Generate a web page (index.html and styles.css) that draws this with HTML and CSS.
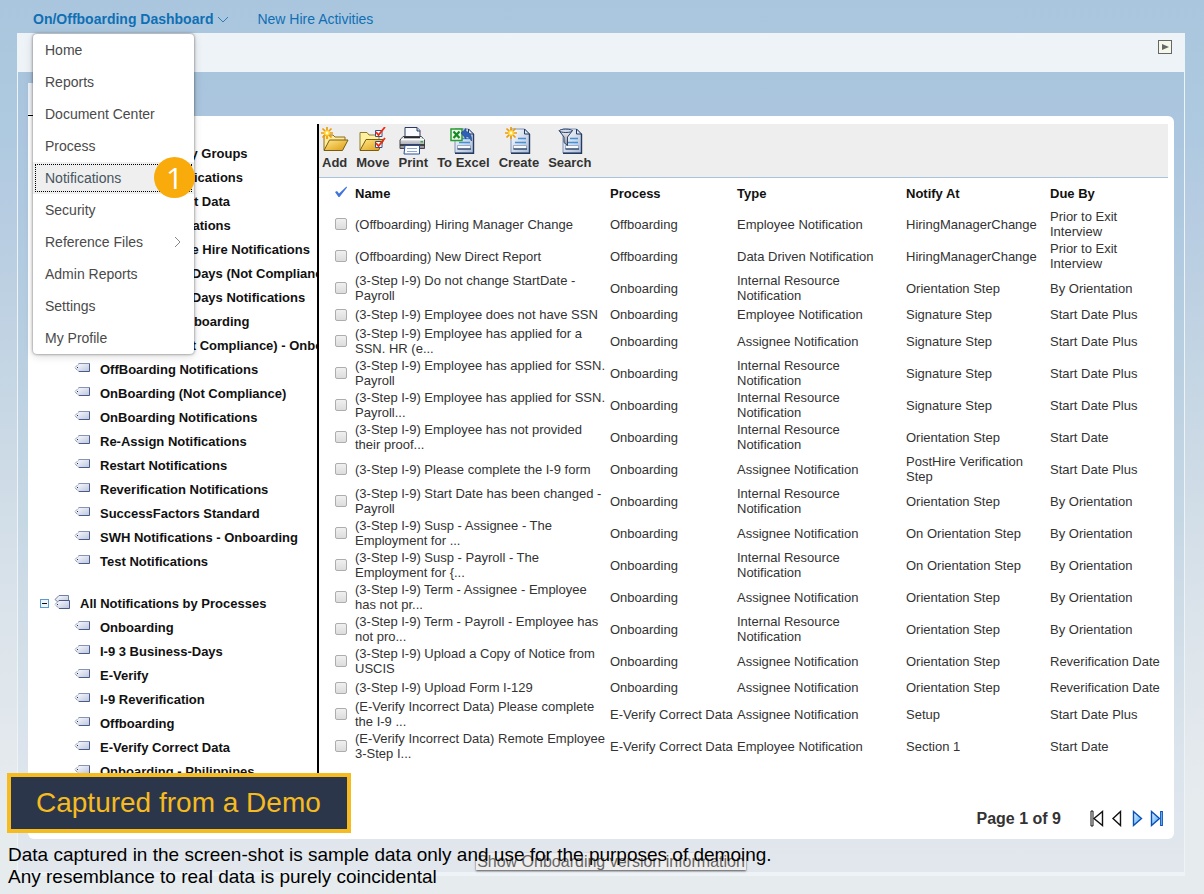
FILE: index.html
```html
<!DOCTYPE html>
<html lang="en">
<head>
<meta charset="utf-8">
<title>On/Offboarding Dashboard</title>
<link rel="stylesheet" href="styles.css">
</head>
<body>
<svg class="sprite" aria-hidden="true">
  <defs>
    <linearGradient id="gTag" x1="0" y1="0" x2="1" y2="1"><stop offset="0" stop-color="#fff"/><stop offset="1" stop-color="#b9c3de"/></linearGradient>
    <linearGradient id="gGold" x1="0" y1="0" x2="1" y2="1"><stop offset="0" stop-color="#ffe98a"/><stop offset="1" stop-color="#dc9a10"/></linearGradient>
    <linearGradient id="gDoc" x1="0" y1="0" x2="1" y2="1"><stop offset="0" stop-color="#fff"/><stop offset="1" stop-color="#a9bbd6"/></linearGradient>
    <linearGradient id="gBlue" x1="0" y1="0" x2="1" y2="1"><stop offset="0" stop-color="#e4f5ff"/><stop offset="1" stop-color="#3fa0f5"/></linearGradient>
    <linearGradient id="gMetal" x1="0" y1="0" x2="0" y2="1"><stop offset="0" stop-color="#f4f4f6"/><stop offset="1" stop-color="#8d8f98"/></linearGradient>
  </defs>
  <symbol id="tag" viewBox="0 0 17 10">
    <path d="M5 .5H15.500V9H5L1 5z" fill="url(#gTag)"/>
    <path d="M5 .5H15.500" stroke="#8794b8" fill="none"/><path d="M15.500 .5V8.500H5" stroke="#4a5b8a" fill="none"/>
    <path d="M5 .5L.8 4.700L5 8.700" stroke="#5d6b90" stroke-dasharray="1 1" fill="none"/><rect x="3" y="4" width="1" height="1" fill="#333"/>
  </symbol>
  <symbol id="tags" viewBox="0 0 17 15">
    <path d="M5 .5H14.500V8H5L1 4.500z" fill="url(#gTag)" stroke="#6f7ea6"/>
    <path d="M5 5.500H15.500V13.500H5L1 9.500z" fill="url(#gTag)"/><path d="M5 5.500H15.500V13.500H5" stroke="#4a5b8a" fill="none"/>
    <path d="M5 5.500L1 9.500L5 13.500" stroke="#5d6b90" stroke-dasharray="1 1" fill="none"/><rect x="3" y="9" width="1" height="1" fill="#333"/>
  </symbol>
  <symbol id="spark" viewBox="0 0 12 12">
    <path d="M6 0V12M0 6H12M1.500 1.500L10.500 10.500M10.500 1.500L1.500 10.500" stroke="#f09a08" stroke-width="1.700"/>
    <circle cx="6" cy="6" r="2.800" fill="#ffd93a"/><circle cx="6" cy="6" r="1.400" fill="#fffbd0"/>
  </symbol>
  <symbol id="doc" viewBox="0 0 21 26">
    <path d="M1 1H14.500L19.500 6V25H1z" fill="url(#gDoc)" stroke="#7f93b5"/>
    <path d="M19.500 6V25.300H1" fill="none" stroke="#243a60" stroke-width="1.400"/>
    <path d="M14.500 1V6H19.500z" fill="#dfe8f5" stroke="#243a60"/>
    <path d="M8 10.500H16M5 14.500H16" stroke="#4690d8" stroke-width="1.300"/>
    <path d="M3.500 17.500H16.500V21H3.500z" fill="#f6f9fd" stroke="#8a9cba" stroke-width=".8"/><path d="M3.500 21H17" stroke="#243a60" stroke-width="1.200"/>
  </symbol>
  <symbol id="add" viewBox="0 0 28 28">
    <path d="M3 23V8H12L14 10H24V13" fill="#ffeb9a" stroke="#8c6f20"/>
    <path d="M3 23.500L8.500 13H27L21.500 23.500z" fill="url(#gGold)" stroke="#7a5c10"/>
    <use href="#spark" x="0" y="0" width="12" height="12"/>
  </symbol>
  <symbol id="move" viewBox="0 0 28 28">
    <path d="M1 23V5.500H8L10 8H20V13" fill="#fff0a0" stroke="#8c7a35"/>
    <path d="M1 23.500L7 12.500H25L19.500 23.500z" fill="url(#gGold)" stroke="#7a5c10"/>
    <path d="M16.500 3.500H23V9.500H16.500zM16.500 14.500H23V20.500H16.500z" fill="#fff" stroke="#35508c"/>
    <path d="M17 5L19.500 8L26 0M17 16L19.500 19L26 11" fill="none" stroke="#f02a10" stroke-width="1.800"/>
  </symbol>
  <symbol id="print" viewBox="0 0 28 28">
    <path d="M6 11V.5H18L21 3.500V11" fill="#f8faff" stroke="#2c3a60"/>
    <path d="M18 .5V4H21" fill="#c7d3ea" stroke="#2c3a60"/>
    <path d="M4 9.500H22.500L25.500 13V21.500H1V13z" fill="url(#gMetal)" stroke="#44464f"/>
    <path d="M2 12.500H25" stroke="#fff" stroke-width="1.500"/><path d="M5 10.500H21" stroke="#27282e" stroke-width="1.500"/>
    <path d="M1 18H26" stroke="#34353c" stroke-width="1.800"/><rect x="21.500" y="14" width="2.500" height="1.500" fill="#28b43a"/>
    <path d="M6 18.500H20.500V27H5z" fill="#fff" stroke="#27509a"/><path d="M8 21.500H18M8 24.500H18" stroke="#8fa7d0"/>
  </symbol>
  <symbol id="excel" viewBox="0 0 28 28">
    <use href="#doc" x="5" y="1" width="21" height="26"/>
    <path d="M2 2H13V13.500H2z" fill="#edf8e8" stroke="#2a9b35" stroke-width="1.500"/>
    <path d="M4.500 4.500L10.500 11M10.500 4.500L4.500 11" stroke="#168a25" stroke-width="2.300"/>
    <path d="M12 6L17 1.500V4.500C21 5 23 9 22.500 14C20.500 10.500 19 9.500 17 9.500V12z" fill="#2f60b8" stroke="#1b3f88" stroke-width=".6"/>
  </symbol>
  <symbol id="create" viewBox="0 0 28 28">
    <use href="#doc" x="5" y="1" width="21" height="26"/><use href="#spark" x="0" y="0" width="12" height="12"/>
  </symbol>
  <symbol id="search" viewBox="0 0 28 28">
    <use href="#doc" x="6" y="1" width="21" height="26"/>
    <path d="M3 3.500H16.500L11.500 10V18.500L8 15.500V10z" fill="url(#gMetal)" stroke="#2c4269"/>
    <ellipse cx="9.800" cy="3.800" rx="6.500" ry="1.700" fill="#cfdaea" stroke="#2c4269"/>
  </symbol>
</svg>

<div class="page">
  <nav class="topnav">
    <button class="nav-main" type="button">On/Offboarding Dashboard
      <svg width="12" height="7" viewBox="0 0 12 7"><path d="M1 1L6 6L11 1" fill="none" stroke="#2f7db8"/></svg>
    </button>
    <a class="nav-link" href="#">New Hire Activities</a>
    <div class="menu">
      <button type="button">Home</button>
      <button type="button">Reports</button>
      <button type="button">Document Center</button>
      <button type="button">Process</button>
      <button type="button" class="focused">Notifications</button>
      <button type="button">Security</button>
      <button type="button">Reference Files
        <svg width="7" height="12" viewBox="0 0 7 12"><path d="M1 1L6 6L1 11" fill="none" stroke="#888"/></svg>
      </button>
      <button type="button">Admin Reports</button>
      <button type="button">Settings</button>
      <button type="button">My Profile</button>
      <span class="badge">1</span>
    </div>
  </nav>

  <div class="frame">
    <header class="band">
      <button class="play" type="button" aria-label="Open panel"><svg width="7" height="6" viewBox="0 0 7 6"><path d="M0 0L7 3L0 6z" fill="#666"/></svg></button>
    </header>
    <div class="body">
      <div class="tab"></div>
      <main class="content">
        <aside class="tree">
          <ul>
            <li class="group"><span class="toggle"></span><svg class="tags"><use href="#tags"/></svg>All Notifications by Groups</li>
            <li><svg><use href="#tag"/></svg>Customer Notifications</li>
            <li><svg><use href="#tag"/></svg>E-Verify Correct Data</li>
            <li><svg><use href="#tag"/></svg>E-Verify Notifications</li>
            <li><svg><use href="#tag"/></svg>Temp Employee Hire Notifications</li>
            <li><svg><use href="#tag"/></svg>I-9 3 Business-Days (Not Compliance)</li>
            <li><svg><use href="#tag"/></svg>I-9 3 Business-Days Notifications</li>
            <li><svg><use href="#tag"/></svg>Department Onboarding</li>
            <li><svg><use href="#tag"/></svg>All Groups (Not Compliance) - Onboarding</li>
            <li><svg><use href="#tag"/></svg>OffBoarding Notifications</li>
            <li><svg><use href="#tag"/></svg>OnBoarding (Not Compliance)</li>
            <li><svg><use href="#tag"/></svg>OnBoarding Notifications</li>
            <li><svg><use href="#tag"/></svg>Re-Assign Notifications</li>
            <li><svg><use href="#tag"/></svg>Restart Notifications</li>
            <li><svg><use href="#tag"/></svg>Reverification Notifications</li>
            <li><svg><use href="#tag"/></svg>SuccessFactors Standard</li>
            <li><svg><use href="#tag"/></svg>SWH Notifications - Onboarding</li>
            <li><svg><use href="#tag"/></svg>Test Notifications</li>
          </ul>
          <ul>
            <li class="group"><span class="toggle"></span><svg class="tags"><use href="#tags"/></svg>All Notifications by Processes</li>
            <li><svg><use href="#tag"/></svg>Onboarding</li>
            <li><svg><use href="#tag"/></svg>I-9 3 Business-Days</li>
            <li><svg><use href="#tag"/></svg>E-Verify</li>
            <li><svg><use href="#tag"/></svg>I-9 Reverification</li>
            <li><svg><use href="#tag"/></svg>Offboarding</li>
            <li><svg><use href="#tag"/></svg>E-Verify Correct Data</li>
            <li><svg><use href="#tag"/></svg>Onboarding - Philippines</li>
          </ul>
        </aside>
        <section class="list">
          <div class="toolbar">
            <button type="button"><svg><use href="#add"/></svg>Add</button>
            <button type="button"><svg><use href="#move"/></svg>Move</button>
            <button type="button"><svg><use href="#print"/></svg>Print</button>
            <button type="button"><svg><use href="#excel"/></svg>To Excel</button>
            <button type="button"><svg><use href="#create"/></svg>Create</button>
            <button type="button"><svg><use href="#search"/></svg>Search</button>
          </div>
          <table>
            <colgroup><col class="c-check"><col class="c-name"><col class="c-process"><col class="c-type"><col class="c-notify"><col class="c-due"></colgroup>
            <thead>
              <tr><th><svg class="tick" width="14" height="12" viewBox="0 0 14 12"><path d="M1 6L3 5L5 7.500L12.500 .5L13 1.500L5.500 11H4.500z" fill="#3f74dc"/></svg></th><th>Name</th><th>Process</th><th>Type</th><th>Notify At</th><th>Due By</th></tr>
            </thead>
            <tbody>
              <tr><td><input type="checkbox" aria-label="Select row 1"></td><td>(Offboarding) Hiring Manager Change</td><td>Offboarding</td><td>Employee Notification</td><td>HiringManagerChange</td><td>Prior to Exit Interview</td></tr>
              <tr><td><input type="checkbox" aria-label="Select row 2"></td><td>(Offboarding) New Direct Report</td><td>Offboarding</td><td>Data Driven Notification</td><td>HiringManagerChange</td><td>Prior to Exit Interview</td></tr>
              <tr><td><input type="checkbox" aria-label="Select row 3"></td><td>(3-Step I-9) Do not change StartDate - Payroll</td><td>Onboarding</td><td>Internal Resource Notification</td><td>Orientation Step</td><td>By Orientation</td></tr>
              <tr><td><input type="checkbox" aria-label="Select row 4"></td><td>(3-Step I-9) Employee does not have SSN</td><td>Onboarding</td><td>Employee Notification</td><td>Signature Step</td><td>Start Date Plus</td></tr>
              <tr><td><input type="checkbox" aria-label="Select row 5"></td><td>(3-Step I-9) Employee has applied for a SSN. HR (e...</td><td>Onboarding</td><td>Assignee Notification</td><td>Signature Step</td><td>Start Date Plus</td></tr>
              <tr><td><input type="checkbox" aria-label="Select row 6"></td><td>(3-Step I-9) Employee has applied for SSN. Payroll</td><td>Onboarding</td><td>Internal Resource Notification</td><td>Signature Step</td><td>Start Date Plus</td></tr>
              <tr><td><input type="checkbox" aria-label="Select row 7"></td><td>(3-Step I-9) Employee has applied for SSN. Payroll...</td><td>Onboarding</td><td>Internal Resource Notification</td><td>Signature Step</td><td>Start Date Plus</td></tr>
              <tr><td><input type="checkbox" aria-label="Select row 8"></td><td>(3-Step I-9) Employee has not provided their proof...</td><td>Onboarding</td><td>Internal Resource Notification</td><td>Orientation Step</td><td>Start Date</td></tr>
              <tr><td><input type="checkbox" aria-label="Select row 9"></td><td>(3-Step I-9) Please complete the I-9 form</td><td>Onboarding</td><td>Assignee Notification</td><td>PostHire Verification Step</td><td>Start Date Plus</td></tr>
              <tr><td><input type="checkbox" aria-label="Select row 10"></td><td>(3-Step I-9) Start Date has been changed - Payroll</td><td>Onboarding</td><td>Internal Resource Notification</td><td>Orientation Step</td><td>By Orientation</td></tr>
              <tr><td><input type="checkbox" aria-label="Select row 11"></td><td>(3-Step I-9) Susp - Assignee - The Employment for ...</td><td>Onboarding</td><td>Assignee Notification</td><td>On Orientation Step</td><td>By Orientation</td></tr>
              <tr><td><input type="checkbox" aria-label="Select row 12"></td><td>(3-Step I-9) Susp - Payroll - The Employment for {...</td><td>Onboarding</td><td>Internal Resource Notification</td><td>On Orientation Step</td><td>By Orientation</td></tr>
              <tr><td><input type="checkbox" aria-label="Select row 13"></td><td>(3-Step I-9) Term - Assignee - Employee has not pr...</td><td>Onboarding</td><td>Assignee Notification</td><td>Orientation Step</td><td>By Orientation</td></tr>
              <tr><td><input type="checkbox" aria-label="Select row 14"></td><td>(3-Step I-9) Term - Payroll - Employee has not pro...</td><td>Onboarding</td><td>Internal Resource Notification</td><td>Orientation Step</td><td>By Orientation</td></tr>
              <tr><td><input type="checkbox" aria-label="Select row 15"></td><td>(3-Step I-9) Upload a Copy of Notice from USCIS</td><td>Onboarding</td><td>Assignee Notification</td><td>Orientation Step</td><td>Reverification Date</td></tr>
              <tr><td><input type="checkbox" aria-label="Select row 16"></td><td>(3-Step I-9) Upload Form I-129</td><td>Onboarding</td><td>Assignee Notification</td><td>Orientation Step</td><td>Reverification Date</td></tr>
              <tr><td><input type="checkbox" aria-label="Select row 17"></td><td>(E-Verify Incorrect Data) Please complete the I-9 ...</td><td>E-Verify Correct Data</td><td>Assignee Notification</td><td>Setup</td><td>Start Date Plus</td></tr>
              <tr><td><input type="checkbox" aria-label="Select row 18"></td><td>(E-Verify Incorrect Data) Remote Employee 3-Step I...</td><td>E-Verify Correct Data</td><td>Employee Notification</td><td>Section 1</td><td>Start Date</td></tr>
            </tbody>
          </table>
          <div class="pager">
            <span>Page 1 of 9</span>
            <div class="pager-buttons">
              <button type="button" aria-label="First page"><svg width="14" height="17" viewBox="0 0 14 17"><path d="M4 8.500L12.500 1.500V15.500z" fill="#fff" stroke="#111" stroke-width="1.400"/><path d="M1 1H3V16H1z" fill="#fff" stroke="#111"/></svg></button>
              <button type="button" aria-label="Previous page"><svg width="14" height="17" viewBox="0 0 14 17"><path d="M3 8.500L10.500 1.500V15.500z" fill="#fff" stroke="#111" stroke-width="1.400"/></svg></button>
              <button type="button" aria-label="Next page"><svg width="14" height="17" viewBox="0 0 14 17"><path d="M11.500 8.500L3.500 1.500V15.500z" fill="url(#gBlue)" stroke="#0a50b8" stroke-width="1.400"/></svg></button>
              <button type="button" aria-label="Last page"><svg width="14" height="17" viewBox="0 0 14 17"><path d="M9.500 8.500L1.500 1.500V15.500z" fill="url(#gBlue)" stroke="#0a50b8" stroke-width="1.400"/><path d="M11.500 1V16" stroke="#0a50b8" stroke-width="2.800"/><path d="M11.500 2V15" stroke="#7cc0fa" stroke-width=".8"/></svg></button>
            </div>
          </div>
        </section>
      </main>
      <footer class="foot"><button type="button">Show Onboarding version information</button></footer>
    </div>
  </div>

  <div class="banner">Captured from a Demo</div>
  <p class="caption">Data captured in the screen-shot is sample data only and use for the purposes of demoing.<br>Any resemblance to real data is purely coincidental</p>
</div>
</body>
</html>
```
FILE: styles.css
```css
* { box-sizing: border-box; }

body {
  margin: 0;
  font: 13px/15px "Liberation Sans", Arial, sans-serif;
  color: #333;
}

button {
  margin: 0;
  padding: 0;
  border: 0;
  background: none;
  font: inherit;
  color: inherit;
}

.sprite { position: absolute; width: 0; height: 0; }

.page {
  position: relative;
  display: flex;
  flex-direction: column;
  min-height: 100vh;
  padding: 0 19px 18px 17px;
  background: linear-gradient(#aac6de 0, #aecae0 15%, #b5cbe1 22%, #c7d7e4 45%, #dce4eb 70%, #e6ebee 90%);
}

.topnav {
  position: relative;
  display: flex;
  align-items: center;
  gap: 28px;
  height: 33px;
  padding: 6px 0 0 16px;
  font-size: 14px;
  color: #0f6fb4;
}
.nav-main { display: flex; align-items: center; gap: 4px; font-weight: bold; }
.nav-link { color: #0f6fb4; text-decoration: none; }

.menu {
  position: absolute;
  left: 16px;
  top: 34px;
  z-index: 2;
  display: flex;
  flex-direction: column;
  width: 161px;
  background: #fff;
  border-radius: 4px;
  box-shadow: 0 0 3px rgba(0, 0, 0, .55), 0 2px 10px rgba(0, 0, 0, .15);
}
.menu button {
  display: flex;
  align-items: center;
  justify-content: space-between;
  height: 32px;
  padding: 0 13px 0 12px;
  color: #4a4a4a;
  text-align: left;
}
.menu .focused {
  background: #efefef;
  outline: 1px dotted #000;
  outline-offset: -3px;
  color: #46555f;
}
.badge {
  position: absolute;
  left: 121px;
  top: 123px;
  width: 41px;
  height: 41px;
  border-radius: 50%;
  background: #f8ab0b;
  color: #fff;
  font: 500 30px/41px "Open Sans", sans-serif;
  text-align: center;
}

.frame {
  flex: 1;
  display: flex;
  flex-direction: column;
  border: solid #eef3f8;
  border-width: 0 1px 4px;
}
.band {
  display: flex;
  justify-content: flex-end;
  height: 39px;
  padding: 7px 12px 0 0;
  background: #eef3f8;
}
.play {
  display: flex;
  align-items: center;
  justify-content: center;
  width: 14px;
  height: 14px;
  border: 1px solid #666;
  background: #f3f8e8;
}
.body {
  flex: 1;
  display: flex;
  flex-direction: column;
  padding: 11px 10px 0;
  background: linear-gradient(#a9c4dd 0, #adc8df 15%, #b5cde0 30%, #c9d9e5 60%, #dbe4ec 85%, #e2e7ed 100%);
}
.tab { width: 130px; height: 33px; background: #eef3f8; border-bottom: 2px solid #fff; }
.tab::before { content: ""; display: block; height: 32px; border-bottom: 1px solid #000; }

.content {
  flex: 1;
  display: flex;
  padding: 8px 6px 8px 0;
  background: #fff;
  border-radius: 0 6px 6px 6px;
}

.tree {
  width: 291px;
  border-right: 2px solid #000;
  overflow: hidden;
  white-space: nowrap;
  font-weight: bold;
  color: #111;
}
.tree ul { margin: 0; padding: 17px 0 0; list-style: none; }
.tree ul + ul { padding-top: 18px; }
.tree li { display: flex; align-items: center; gap: 9px; height: 24px; padding-left: 46px; }
.tree li svg { flex: none; width: 17px; height: 10px; margin-bottom: 2px; }
.tree .group { gap: 5px; padding-left: 12px; }
.tree .group svg { width: 17px; height: 15px; margin-right: 4px; }
.toggle { width: 9px; height: 9px; border: 1px solid #5b9bd0; background: linear-gradient(#111, #111) center / 5px 1px no-repeat #eef5fc; }

.list { flex: 1; display: flex; flex-direction: column; min-width: 0; }
.toolbar {
  display: flex;
  gap: 9px;
  height: 54px;
  padding: 3px 3px 0;
  background: #eee;
  border-bottom: 1px solid #a9c4dc;
}
.toolbar button { display: flex; flex-direction: column; align-items: center; align-self: flex-start; font-weight: bold; color: #333; }
.toolbar svg { width: 28px; height: 28px; margin: 0 -2px; }

table { width: 100%; table-layout: fixed; border-collapse: collapse; }
.c-check { width: 36px; }
.c-process { width: 127px; }
.c-type { width: 169px; }
.c-notify { width: 144px; }
.c-due { width: 118px; }
th { height: 30px; padding: 0; text-align: left; color: #111; }
td { height: 21px; padding: 1px 0; }
td:nth-child(2) { padding-right: 4px; }
th:first-child { padding-left: 15px; }
td:first-child { padding-left: 16px; }
.tick { display: block; margin-bottom: 2px; }
input[type="checkbox"] {
  appearance: none;
  display: block;
  width: 12px;
  height: 12px;
  margin: 0;
  border: 1px solid #adadad;
  border-radius: 2px;
  background: linear-gradient(#f0f0f0, #dcdcdc);
}

.pager {
  display: flex;
  align-items: center;
  justify-content: flex-end;
  gap: 29px;
  margin-top: auto;
  padding: 0 4px 4px 0;
  font-size: 16px;
  font-weight: bold;
}
.pager-buttons { display: flex; gap: 6px; }
.pager svg { display: block; }

.foot { display: flex; justify-content: center; height: 33px; padding: 14px 0 0 20px; }
.foot button {
  height: 17px;
  padding: 0 1px;
  background: #eee;
  box-shadow: 0 1px 2px #555;
  color: #666;
  font-size: 16px;
  line-height: 17px;
}

.banner {
  position: absolute;
  left: 7px;
  bottom: 61px;
  padding: 12px 26px 12px 25px;
  border: 4px solid #f5bb1f;
  background: #2c364a;
  color: #f5bb1f;
  font-size: 28px;
  line-height: 28px;
}
.caption {
  position: absolute;
  left: 8px;
  bottom: 6px;
  margin: 0;
  color: #000;
  font-size: 19px;
  line-height: 22px;
}
```
